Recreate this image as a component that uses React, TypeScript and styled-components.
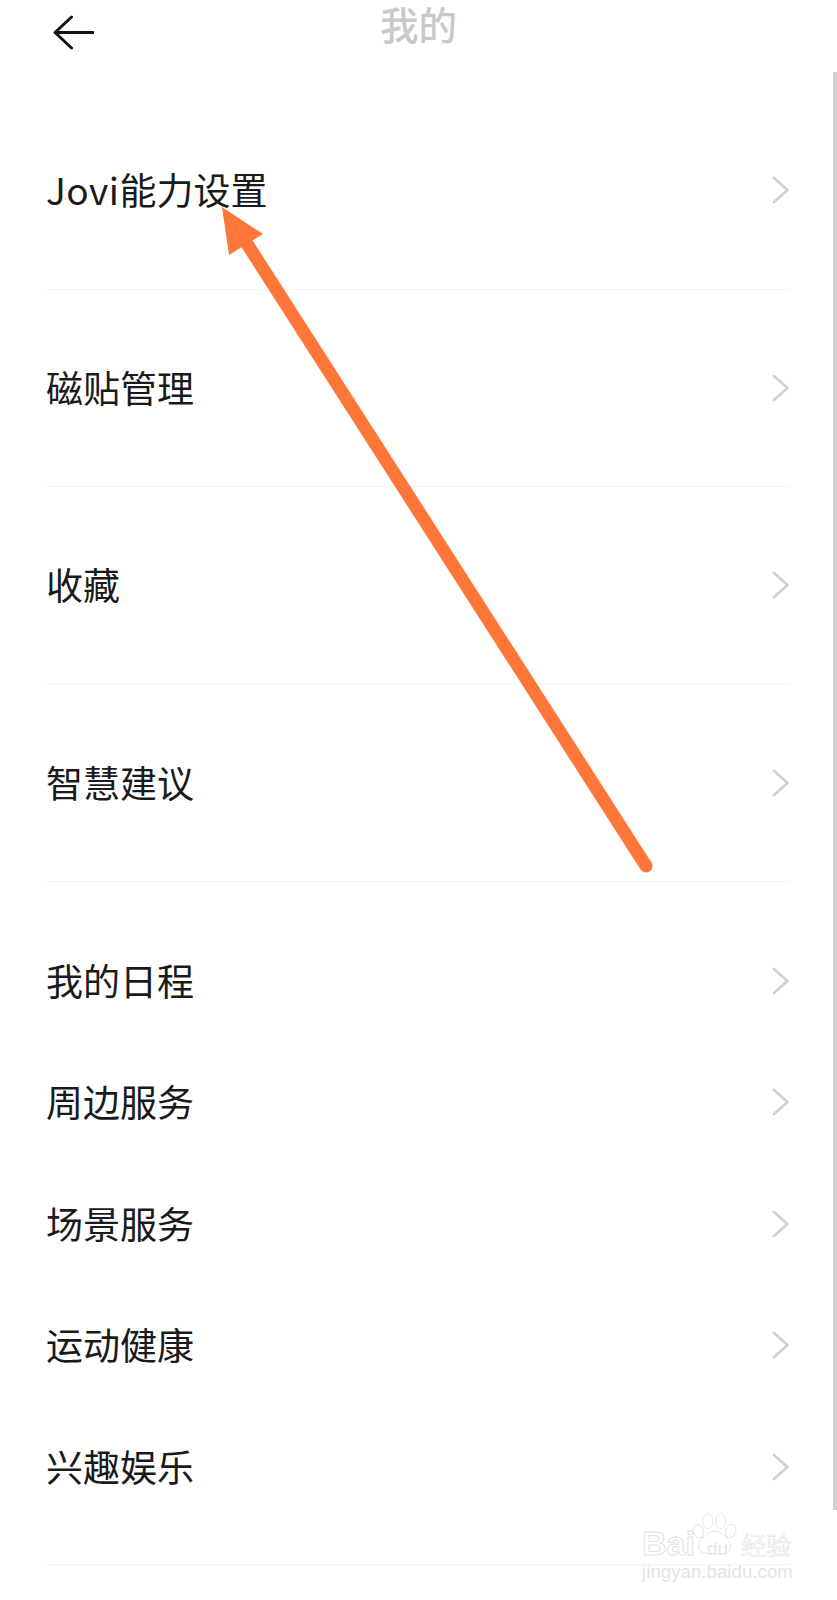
import styled, { createGlobalStyle } from 'styled-components';

const GlobalStyle = createGlobalStyle`
  html, body {
    margin: 0;
    padding: 0;
    background: #fff;
  }
  body {
    font-family: "Noto Sans CJK SC", "Noto Sans", sans-serif;
  }
`;

const topRows = ['磁贴管理', '收藏', '智慧建议'];
const bottomRows = ['我的日程', '周边服务', '场景服务', '运动健康', '兴趣娱乐'];

const Chevron = () => (
  <ChevronIcon viewBox="0 0 18 28" aria-hidden="true">
    <path d="M2 2 L15.5 14 L2 26" fill="none" stroke="#d2d2d2" strokeWidth="2.8" strokeLinecap="round" strokeLinejoin="round" />
  </ChevronIcon>
);

const App = () => {
  return (
    <Page>
      <GlobalStyle />
      <Header>
        <BackIcon viewBox="0 0 42 36" aria-hidden="true">
          <path d="M19 2 L2 18 L19 34 M2 18 H41" fill="none" stroke="#111" strokeWidth="3" strokeLinecap="round" strokeLinejoin="round" />
        </BackIcon>
        <Title>我的</Title>
      </Header>

      <TopList>
        <TallRow>
          <Label><Latin>Jovi</Latin>能力设置</Label>
          <Chevron />
        </TallRow>
        {topRows.map((label) => (
          <TallRow key={label}>
            <Label>{label}</Label>
            <Chevron />
          </TallRow>
        ))}
      </TopList>

      <BottomList>
        {bottomRows.map((label) => (
          <ShortRow key={label}>
            <Label>{label}</Label>
            <Chevron />
          </ShortRow>
        ))}
      </BottomList>

      <Scrollbar />

      <ArrowOverlay viewBox="0 0 837 1600" aria-hidden="true">
        <line x1="646" y1="866" x2="242" y2="236" stroke="#ff7738" strokeWidth="13" strokeLinecap="round" />
        <polygon points="222,207 263,234 229,255" fill="#ff7738" />
      </ArrowOverlay>

      <Watermark>
        <PawMark viewBox="0 0 50 46" aria-hidden="true">
          <g fill="#fff" stroke="#e4e4e4" strokeWidth="1">
            <ellipse cx="7" cy="20" rx="5.5" ry="7.5" transform="rotate(-20 7 20)" />
            <ellipse cx="17" cy="9" rx="5.5" ry="8" />
            <ellipse cx="31" cy="9" rx="5.5" ry="8" />
            <ellipse cx="42" cy="20" rx="5.5" ry="7.5" transform="rotate(20 42 20)" />
            <path d="M25 20 C33 20 42 30 42 37 C42 44 33 45 25 44 C17 45 7 44 7 37 C7 30 17 20 25 20 Z" />
          </g>
        </PawMark>
        <BrandLine>
          <BrandLatin>Bai</BrandLatin>
          <BrandDu>du</BrandDu>
          <BrandCjk>经验</BrandCjk>
        </BrandLine>
        <BrandUrl>jingyan.baidu.com</BrandUrl>
      </Watermark>
    </Page>
  );
};

const Page = styled.div`
  position: relative;
  width: 837px;
  height: 1600px;
  overflow: hidden;
  background: #fff;
`;

const Header = styled.div`
  position: relative;
  height: 64px;
  display: flex;
  align-items: center;
  justify-content: center;
`;

const BackIcon = styled.svg`
  position: absolute;
  left: 53px;
  top: 15px;
  width: 41px;
  height: 35px;
`;

const Title = styled.div`
  font-size: 38.5px;
  font-weight: 500;
  line-height: 40px;
  color: #c9c9c9;
  margin-bottom: 19px;
`;

const TopList = styled.div`
  margin: 28px 46px 0;
  width: 745px;
`;

const TallRow = styled.div`
  height: 196.5px;
  padding-right: 1px;
  display: flex;
  align-items: center;
  justify-content: space-between;
  border-bottom: 1px solid #f5f5f5;
  box-sizing: content-box;
`;

const BottomList = styled.div`
  margin: 0 46px;
  width: 745px;
  padding: 38px 0 36px;
  border-bottom: 1px solid #f2f2f2;
`;

const ShortRow = styled.div`
  height: 121.5px;
  padding-right: 1px;
  display: flex;
  align-items: center;
  justify-content: space-between;
`;

const Label = styled.span`
  font-size: 37px;
  line-height: 50px;
  color: #1a1a1a;
  margin-bottom: 2px;
`;

const Latin = styled.span`
  letter-spacing: 0.5px;
`;

const ChevronIcon = styled.svg`
  width: 18px;
  height: 28px;
`;

const Scrollbar = styled.div`
  position: absolute;
  top: 72px;
  right: 0;
  width: 4px;
  height: 1438px;
  background: #cfcfcf;
`;

const ArrowOverlay = styled.svg`
  position: absolute;
  left: 0;
  top: 0;
  width: 837px;
  height: 1600px;
  pointer-events: none;
`;

const Watermark = styled.div`
  position: absolute;
  left: 642px;
  top: 1510px;
  width: 150px;
  height: 74px;
  display: flex;
  flex-direction: column;
  align-items: flex-start;
  font-family: "Liberation Sans", "Noto Sans CJK SC", sans-serif;
`;

const PawMark = styled.svg`
  position: absolute;
  left: 50px;
  top: 0;
  width: 46px;
  height: 48px;
`;

const BrandLine = styled.div`
  position: relative;
  margin-top: 18px;
  display: flex;
  align-items: baseline;
  height: 30px;
`;

const BrandLatin = styled.span`
  font-size: 34px;
  line-height: 30px;
  font-weight: 700;
  color: #fff;
  -webkit-text-stroke: 1px #e2e2e2;
`;

const BrandDu = styled.span`
  font-size: 19px;
  line-height: 30px;
  color: #e6e6e6;
  margin-left: 12px;
`;

const BrandCjk = styled.span`
  font-size: 25px;
  line-height: 30px;
  font-family: "Noto Sans CJK SC", sans-serif;
  color: #fff;
  -webkit-text-stroke: 0.7px #e4e4e4;
  margin-left: 13px;
`;

const BrandUrl = styled.div`
  position: relative;
  margin-top: 3px;
  font-size: 18.5px;
  line-height: 22px;
  color: #e4e4e4;
  letter-spacing: 0.1px;
`;

export default App;
